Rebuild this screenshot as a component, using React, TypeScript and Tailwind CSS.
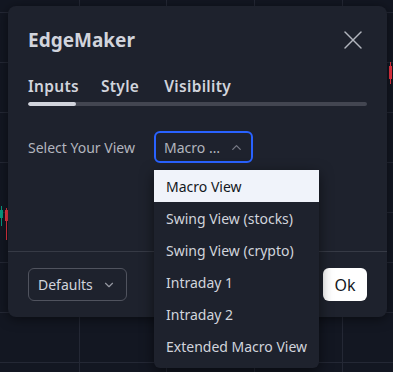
import { ChevronDown, ChevronUp, X } from "lucide-react";

const views = [
  "Macro View",
  "Swing View (stocks)",
  "Swing View (crypto)",
  "Intraday 1",
  "Intraday 2",
  "Extended Macro View",
];

const gridX = [79, 166, 254, 342];
const gridY = [12, 62, 112, 162, 212, 262, 312, 362];

export default function App() {
  return (
    <div
      className="relative w-[393px] h-[372px] overflow-hidden bg-[#131722] text-[#d1d4dc]"
      style={{ fontFamily: '"Noto Sans", "Open Sans", sans-serif' }}
    >
      <ChartBackdrop />

      {/* dialog */}
      <div className="absolute left-[8px] top-[6px] w-[379px] h-[311px] flex flex-col rounded-[8px] bg-[#1e222d] shadow-[0_2px_12px_rgba(0,0,0,0.5)]">
        <div className="flex items-center justify-between pl-[20px] pr-[18px] pt-[20px] h-[48px]">
          <h1 className="text-[19px] font-bold text-[#d1d4dc] leading-[28px]">EdgeMaker</h1>
          <X size={32} strokeWidth={1.1} className="text-[#b2b5be]" />
        </div>

        <div className="px-[20px] mt-[22px]">
          <div className="flex text-[15.5px] font-semibold leading-[20px] tracking-[0.3px] text-[#d1d4dc]">
            <span>Inputs</span>
            <span className="ml-[22px]">Style</span>
            <span className="ml-[25px]">Visibility</span>
          </div>
          <div className="mt-[6px] flex h-[4px] w-[339px] rounded-full bg-[#434651] overflow-hidden">
            <div className="w-[48px] bg-[#d1d4dc] rounded-full" />
          </div>
        </div>

        <div className="flex items-center px-[20px] mt-[25px]">
          <span className="w-[126px] text-[14px] text-[#b2b5be]">Select Your View</span>
          <div className="flex items-center justify-between w-[99px] h-[32px] pl-[8px] pr-[7px] rounded-[6px] border-2 border-[#2962ff] text-[14px] text-[#b2b5be]">
            <span>Macro …</span>
            <ChevronUp size={15} strokeWidth={2} className="text-[#787b86]" />
          </div>
        </div>

        <div className="flex-1" />

        <div className="h-px bg-[#363a45]" />
        <div className="flex items-center justify-between px-[20px] pt-[16px] pb-[16px]">
          <div className="flex items-center justify-between w-[99px] h-[33px] pl-[9px] pr-[10px] rounded-[6px] border border-[#50535e] text-[14px] text-[#d1d4dc]">
            <span>Defaults</span>
            <ChevronDown size={14} strokeWidth={2} className="text-[#9598a1]" />
          </div>
          <button className="w-[44px] h-[33px] rounded-[6px] bg-white text-[16px] text-[#131722]">Ok</button>
        </div>
      </div>

      {/* dropdown */}
      <div className="absolute left-[154px] top-[170px] w-[165px] pb-[6px] rounded-b-[6px] bg-[#1e222d] shadow-[0_4px_14px_rgba(0,0,0,0.55)]">
        {views.map((v, i) => (
          <div
            key={v}
            className={
              i === 0
                ? "flex items-center h-[32px] pl-[12px] text-[14px] bg-[#f0f3fa] text-[#131722]"
                : "flex items-center h-[32px] pl-[12px] text-[14px] text-[#d1d4dc]"
            }
          >
            {v}
          </div>
        ))}
      </div>
    </div>
  );
}

function ChartBackdrop() {
  return (
    <svg className="absolute inset-0" width={393} height={372}>
      {gridX.map((x) => (
        <line key={"x" + x} x1={x + 0.5} y1={0} x2={x + 0.5} y2={372} stroke="#242835" />
      ))}
      {gridY.map((y) => (
        <line key={"y" + y} x1={0} y1={y + 0.5} x2={393} y2={y + 0.5} stroke="#242835" />
      ))}
      {/* candles peeking around the dialog */}
      <rect x={0} y={210} width={3} height={8} fill="#089981" />
      <line x1={1.5} y1={206} x2={1.5} y2={226} stroke="#089981" />
      <line x1={6.5} y1={208} x2={6.5} y2={240} stroke="#f23645" />
      <rect x={5} y={210} width={3} height={11} fill="#f23645" />
      <line x1={390.5} y1={62} x2={390.5} y2={84} stroke="#f23645" />
      <rect x={389} y={66} width={3} height={13} fill="#f23645" />
    </svg>
  );
}
